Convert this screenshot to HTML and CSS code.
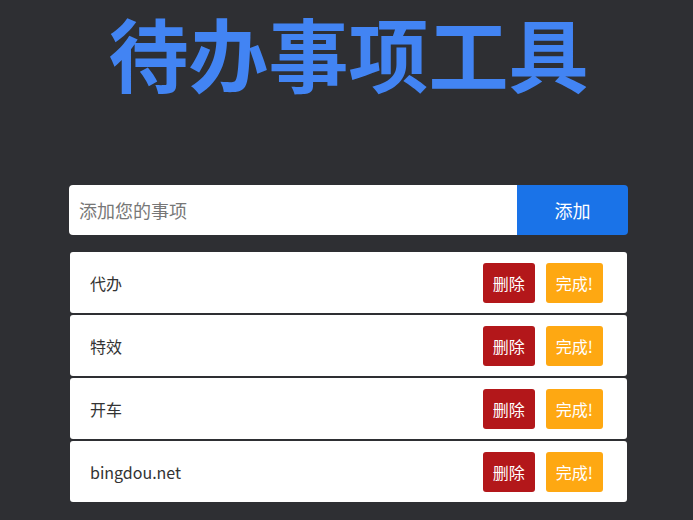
FILE: index.html
```html
<!DOCTYPE html>
<html lang="zh-CN">
<head>
<meta charset="utf-8">
<title>待办事项工具</title>
<link rel="stylesheet" href="styles.css">
</head>
<body>
<div class="app">
  <h1 class="title">待办事项工具</h1>
  <form class="add-form">
    <input class="add-input" type="text" placeholder="添加您的事项">
    <button class="add-btn" type="button">添加</button>
  </form>
  <ul class="list">
    <li class="item"><span class="item-text">代办</span><div class="actions"><button class="btn btn-del" type="button">删除</button><button class="btn btn-done" type="button">完成!</button></div></li>
    <li class="item"><span class="item-text">特效</span><div class="actions"><button class="btn btn-del" type="button">删除</button><button class="btn btn-done" type="button">完成!</button></div></li>
    <li class="item"><span class="item-text">开车</span><div class="actions"><button class="btn btn-del" type="button">删除</button><button class="btn btn-done" type="button">完成!</button></div></li>
    <li class="item"><span class="item-text">bingdou.net</span><div class="actions"><button class="btn btn-del" type="button">删除</button><button class="btn btn-done" type="button">完成!</button></div></li>
  </ul>
</div>
</body>
</html>
```
FILE: styles.css
```css
* { box-sizing: border-box; }
html, body {
  margin: 0;
  padding: 0;
  background: #2e2f33;
  font-family: "Noto Sans CJK SC", "Noto Sans", sans-serif;
}
.app {
  width: 559px;
  margin-left: 69px;
}
.title {
  margin: 3px 0 0;
  font-size: 80px;
  line-height: 96px;
  font-weight: 700;
  color: #4284f3;
  text-align: center;
  white-space: nowrap;
}
.add-form {
  display: flex;
  margin-top: 86px;
  height: 50px;
  border-radius: 4px;
  overflow: hidden;
}
.add-input {
  flex: 1;
  border: none;
  outline: none;
  padding: 0 10px;
  font-family: inherit;
  font-size: 18px;
  color: #333;
  background: #fff;
}
.add-input::placeholder { color: #777; }
.add-btn {
  width: 111px;
  border: none;
  background: #1a73e8;
  color: #fff;
  font-family: inherit;
  font-size: 18px;
}
.list {
  list-style: none;
  margin: 17px 1px 0;
  padding: 0;
  display: flex;
  flex-direction: column;
  gap: 2px;
}
.item {
  display: flex;
  align-items: center;
  height: 61px;
  padding: 0 24px 0 20px;
  background: #fff;
  border-radius: 3px;
}
.item-text {
  flex: 1;
  font-size: 16px;
  color: #333;
}
.actions {
  display: flex;
  gap: 11px;
}
.btn {
  height: 40px;
  padding: 0 10px;
  border: none;
  border-radius: 3px;
  color: #fff;
  font-family: inherit;
  font-size: 16px;
}
.btn-del { background: #b3171a; }
.btn-done { background: #fea812; }
```
